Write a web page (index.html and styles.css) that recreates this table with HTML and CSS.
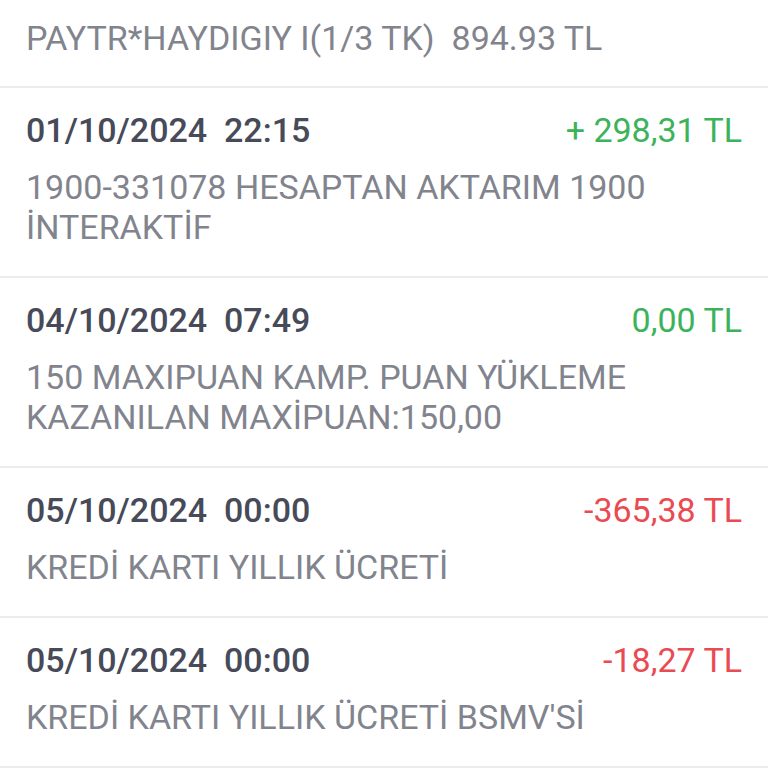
FILE: index.html
```html
<!DOCTYPE html>
<html lang="tr">
<head>
<meta charset="utf-8">
<link rel="stylesheet" href="styles.css">
</head>
<body>
<div class="list">
  <div class="row head">
    <div class="desc">PAYTR*HAYDIGIY I(1/3 TK)  894.93 TL</div>
  </div>
  <div class="row">
    <div class="top"><span class="date">01/10/2024  22:15</span><span class="amt pos">+ 298,31 TL</span></div>
    <div class="desc">1900-331078 HESAPTAN AKTARIM 1900<br>İNTERAKTİF</div>
  </div>
  <div class="row">
    <div class="top"><span class="date">04/10/2024  07:49</span><span class="amt pos">0,00 TL</span></div>
    <div class="desc">150 MAXIPUAN KAMP. PUAN YÜKLEME<br>KAZANILAN MAXİPUAN:150,00</div>
  </div>
  <div class="row">
    <div class="top"><span class="date">05/10/2024  00:00</span><span class="amt neg">-365,38 TL</span></div>
    <div class="desc">KREDİ KARTI YILLIK ÜCRETİ</div>
  </div>
  <div class="row">
    <div class="top"><span class="date">05/10/2024  00:00</span><span class="amt neg">-18,27 TL</span></div>
    <div class="desc">KREDİ KARTI YILLIK ÜCRETİ BSMV'Sİ</div>
  </div>
</div>
</body>
</html>
```
FILE: styles.css
```css
html, body {
  margin: 0;
  padding: 0;
  background: #ffffff;
}
body {
  font-family: Roboto, "Noto Sans", sans-serif;
  overflow: hidden;
}
.list {
  display: flex;
  flex-direction: column;
}
.row {
  display: flex;
  flex-direction: column;
  gap: 17px;
  padding: 22px 26px 29px 26px;
  border-bottom: 2px solid #ececec;
}
.row.head {
  padding-top: 18px;
  padding-bottom: 28px;
}
.top {
  display: flex;
  justify-content: space-between;
  align-items: center;
  height: 40px;
}
.date {
  font-size: 34px;
  font-weight: 500;
  color: #474a58;
  white-space: pre;
  line-height: 40px;
}
.amt {
  font-size: 34px;
  line-height: 40px;
  white-space: pre;
}
.pos { color: #3cb35b; }
.neg { color: #ea4b53; }
.desc {
  font-size: 34px;
  line-height: 40px;
  color: #82848d;
  white-space: pre;
}
```
